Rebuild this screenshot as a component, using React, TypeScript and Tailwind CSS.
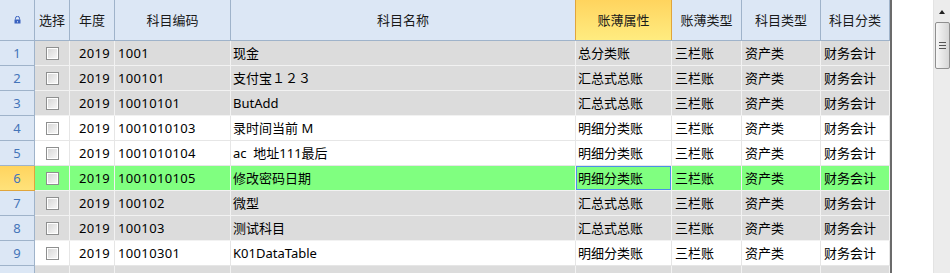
import React from "react";

type Row = {
  n: number;
  code: string;
  name: string;
  attr: string;
  bg: "gray" | "white" | "green";
};

const rows: Row[] = [
  { n: 1, code: "1001", name: "现金", attr: "总分类账", bg: "gray" },
  { n: 2, code: "100101", name: "支付宝１２３", attr: "汇总式总账", bg: "gray" },
  { n: 3, code: "10010101", name: "ButAdd", attr: "汇总式总账", bg: "gray" },
  { n: 4, code: "1001010103", name: "录时间当前 M", attr: "明细分类账", bg: "white" },
  { n: 5, code: "1001010104", name: "ac  地址111最后", attr: "明细分类账", bg: "white" },
  { n: 6, code: "1001010105", name: "修改密码日期", attr: "明细分类账", bg: "green" },
  { n: 7, code: "100102", name: "微型", attr: "汇总式总账", bg: "gray" },
  { n: 8, code: "100103", name: "测试科目", attr: "汇总式总账", bg: "gray" },
  { n: 9, code: "10010301", name: "K01DataTable", attr: "明细分类账", bg: "white" },
];

const GRID =
  "grid grid-cols-[35px_35px_45px_116px_345px_96px_70px_79px_69px]";

function Lock() {
  return (
    <svg width="7" height="8" viewBox="0 0 7 8">
      <path d="M1.5 3.5V2.3a2 2 0 0 1 4 0v1.2" fill="none" stroke="#3a62bf" strokeWidth="1" />
      <rect x="0.5" y="3.5" width="6" height="4" fill="#3a62bf" />
      <rect x="3" y="5" width="1" height="1.5" fill="#b8c8ee" />
    </svg>
  );
}

function CheckBox() {
  return (
    <div className="w-[13px] h-[13px] border border-[#8e8f8f] bg-white p-px">
      <div className="w-full h-full bg-gradient-to-br from-[#d8d8d8] to-[#f6f6f6]" />
    </div>
  );
}

function HeaderCell({ children, hl }: { children?: React.ReactNode; hl?: boolean }) {
  return (
    <div
      className={
        hl
          ? "h-[40px] flex items-center justify-center border-r border-l border-[#e0a53c] -ml-px bg-gradient-to-b from-[#ffd45e] to-[#ffec80] text-[#1a1a1a]"
          : "h-[40px] flex items-center justify-center border-r border-[#9fb3ca] bg-[#dce7f5] text-[#1a1a1a]"
      }
    >
      {children}
    </div>
  );
}

function DataRow({ r }: { r: Row }) {
  const bg =
    r.bg === "gray" ? "bg-[#dcdcdc]" : r.bg === "green" ? "bg-[#80ff80]" : "bg-white";
  const line = r.bg === "white" ? "border-[#e6e6e6]" : "border-[#f2f2f2]";
  const cell = `h-[25px] border-r border-b ${line} flex items-center whitespace-pre overflow-hidden`;
  const sel = r.n === 6;
  return (
    <div className={`${GRID} ${bg}`}>
      <div
        className={
          sel
            ? "h-[25px] border-r border-b border-[#e0a53c] bg-gradient-to-b from-[#ffd45e] to-[#ffe27a] flex items-center justify-center text-[#4475b9]"
            : "h-[25px] border-r border-b border-[#9fb3ca] bg-[#dce7f5] flex items-center justify-center text-[#4475b9]"
        }
      >
        {r.n}
      </div>
      <div className={`${cell} justify-center`}>
        <CheckBox />
      </div>
      <div className={`${cell} justify-end pr-[4px] tracking-[0.3px]`}>2019</div>
      <div className={`${cell} pl-[3px] tracking-[0.35px]`}>{r.code}</div>
      <div className={`${cell} pl-[2px]`}>{r.name}</div>
      <div
        className={`${cell} pl-[2px] ${sel ? "shadow-[inset_0_0_0_1px_#4a90e8]" : ""}`}
      >
        {r.attr}
      </div>
      <div className={`${cell} pl-[3px]`}>三栏账</div>
      <div className={`${cell} pl-[3px]`}>资产类</div>
      <div className={`${cell} pl-[3px]`}>财务会计</div>
    </div>
  );
}

function EmptyRow() {
  const cell = "h-[25px] border-r border-b border-[#f2f2f2]";
  return (
    <div className={`${GRID} bg-[#dcdcdc]`}>
      <div className="h-[25px] border-r border-b border-[#9fb3ca] bg-[#dce7f5]" />
      <div className={cell} />
      <div className={cell} />
      <div className={cell} />
      <div className={cell} />
      <div className={cell} />
      <div className={cell} />
      <div className={cell} />
      <div className={cell} />
    </div>
  );
}

export default function App() {
  return (
    <div
      className="w-[950px] h-[273px] overflow-hidden bg-white flex text-[13px] text-black leading-none"
      style={{ fontFamily: '"Noto Sans", "Noto Sans CJK SC", sans-serif' }}
    >
      <div className="w-[933px] flex flex-col">
        <div className="h-[2px] bg-[#eeeeee]" />
        <div className="h-px bg-[#6e6e6e]" />
        <div className="flex">
          <div className="w-[892px] border-r-2 border-[#6b6b6b] flex flex-col">
            <div className={`${GRID} border-b border-[#9fb3ca]`}>
              <HeaderCell>
                <Lock />
              </HeaderCell>
              <HeaderCell>选择</HeaderCell>
              <HeaderCell>年度</HeaderCell>
              <HeaderCell>科目编码</HeaderCell>
              <HeaderCell>科目名称</HeaderCell>
              <HeaderCell hl>账薄属性</HeaderCell>
              <HeaderCell>账薄类型</HeaderCell>
              <HeaderCell>科目类型</HeaderCell>
              <HeaderCell>科目分类</HeaderCell>
            </div>
            {rows.map((r) => (
              <DataRow key={r.n} r={r} />
            ))}
            <EmptyRow />
          </div>
          <div className="flex-1 bg-white" />
        </div>
      </div>
      <div className="w-[17px] bg-[#ececec] border-l border-[#e3e3e3] flex flex-col items-center">
        <div className="mt-[10px] w-0 h-0 border-l-[3.5px] border-r-[3.5px] border-b-[4px] border-l-transparent border-r-transparent border-b-[#222]" />
        <div className="mt-[8px] w-[15px] h-[47px] rounded-[2px] border border-[#8f8f8f] bg-gradient-to-r from-[#f7f7f7] to-[#d6d6d6] flex flex-col items-center justify-center gap-[2px]">
          <div className="w-[7px] h-px bg-[#555]" />
          <div className="w-[7px] h-px bg-[#555]" />
          <div className="w-[7px] h-px bg-[#555]" />
        </div>
      </div>
    </div>
  );
}
